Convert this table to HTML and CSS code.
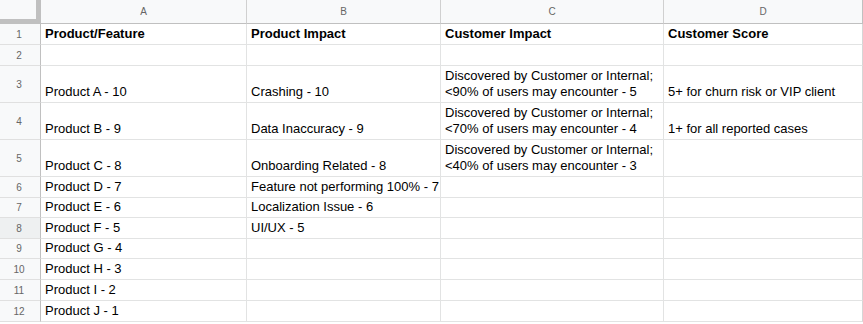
FILE: index.html
```html
<!DOCTYPE html>
<html>
<head>
<meta charset="utf-8">
<link rel="stylesheet" href="styles.css">
</head>
<body>
<div class="sheet">
  <div class="corner"></div>
  <div class="colhead">A</div>
  <div class="colhead">B</div>
  <div class="colhead">C</div>
  <div class="colhead last">D</div>

  <div class="rowhead r21">1</div>
  <div class="cell b">Product/Feature</div>
  <div class="cell b">Product Impact</div>
  <div class="cell b">Customer Impact</div>
  <div class="cell b">Customer Score</div>

  <div class="rowhead r21">2</div>
  <div class="cell"></div>
  <div class="cell"></div>
  <div class="cell"></div>
  <div class="cell"></div>

  <div class="rowhead r37">3</div>
  <div class="cell">Product A - 10</div>
  <div class="cell">Crashing - 10</div>
  <div class="cell">Discovered by Customer or Internal;<br>&lt;90% of users may encounter - 5</div>
  <div class="cell">5+ for churn risk or VIP client</div>

  <div class="rowhead r37">4</div>
  <div class="cell">Product B - 9</div>
  <div class="cell">Data Inaccuracy - 9</div>
  <div class="cell">Discovered by Customer or Internal;<br>&lt;70% of users may encounter - 4</div>
  <div class="cell">1+ for all reported cases</div>

  <div class="rowhead r37">5</div>
  <div class="cell">Product C - 8</div>
  <div class="cell">Onboarding Related - 8</div>
  <div class="cell">Discovered by Customer or Internal;<br>&lt;40% of users may encounter - 3</div>
  <div class="cell"></div>

  <div class="rowhead r21">6</div>
  <div class="cell">Product D - 7</div>
  <div class="cell">Feature not performing 100% - 7</div>
  <div class="cell"></div>
  <div class="cell"></div>

  <div class="rowhead r20">7</div>
  <div class="cell">Product E - 6</div>
  <div class="cell">Localization Issue - 6</div>
  <div class="cell"></div>
  <div class="cell"></div>

  <div class="rowhead r21 sel">8</div>
  <div class="cell">Product F - 5</div>
  <div class="cell">UI/UX - 5</div>
  <div class="cell"></div>
  <div class="cell"></div>

  <div class="rowhead r20">9</div>
  <div class="cell">Product G - 4</div>
  <div class="cell"></div>
  <div class="cell"></div>
  <div class="cell"></div>

  <div class="rowhead r21">10</div>
  <div class="cell">Product H - 3</div>
  <div class="cell"></div>
  <div class="cell"></div>
  <div class="cell"></div>

  <div class="rowhead r21">11</div>
  <div class="cell">Product I - 2</div>
  <div class="cell"></div>
  <div class="cell"></div>
  <div class="cell"></div>

  <div class="rowhead r21">12</div>
  <div class="cell">Product J - 1</div>
  <div class="cell"></div>
  <div class="cell"></div>
  <div class="cell"></div>
</div>
</body>
</html>
```

FILE: styles.css
```css
* { box-sizing: border-box; }
html, body { margin: 0; padding: 0; background: #fff; }
body {
  font-family: "Liberation Sans", Arial, sans-serif;
  color: #000;
  width: 863px;
  height: 324px;
  overflow: hidden;
}
.sheet {
  display: grid;
  grid-template-columns: 41px 206px 194px 223px 199px;
  grid-template-rows: 24px 21px 21px 37px 37px 37px 21px 20px 21px 20px 21px 21px 21px;
}
.corner {
  background: #f8f9fa;
  border-right: 5px solid #c0c0c0;
  border-bottom: 5px solid #c0c0c0;
}
.colhead {
  background: #f8f9fa;
  border-right: 1px solid #d0d0d0;
  border-bottom: 1px solid #c0c0c0;
  font-size: 10px;
  color: #666;
  display: flex;
  align-items: center;
  justify-content: center;
  padding-bottom: 1px;
}
.colhead.last { border-right: 1px solid #c0c0c0; }
.rowhead {
  background: #f8f9fa;
  border-right: 1px solid #c0c0c0;
  border-bottom: 1px solid #e0e0e0;
  font-size: 10px;
  color: #666;
  display: flex;
  align-items: center;
  justify-content: center;
  padding-right: 2px;
}
.rowhead.sel { background: #eef0f1; }
.cell {
  border-right: 1px solid #e2e3e3;
  border-bottom: 1px solid #e2e3e3;
  font-size: 13px;
  line-height: 16px;
  padding: 0 3px 2px 4px;
  display: flex;
  align-items: flex-end;
  white-space: nowrap;
  overflow: visible;
}
.cell:nth-child(5n) { border-right-color: #d6d6d6; }
.b { font-weight: bold; }
```
